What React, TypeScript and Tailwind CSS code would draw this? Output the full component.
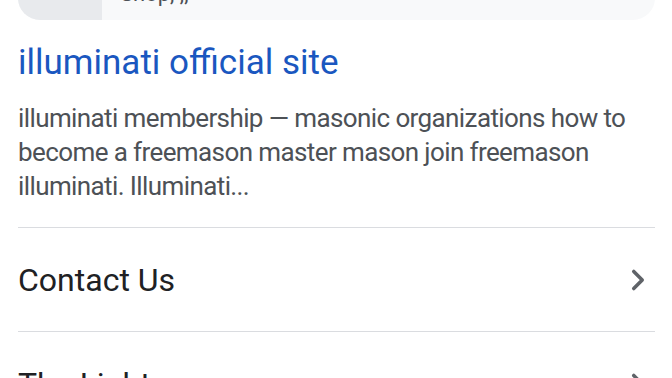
import { ChevronRight } from "lucide-react";

const links = ["Contact Us", "The Light"];

export default function App() {
  return (
    <div className="h-[378px] w-[672px] overflow-hidden bg-white px-[18px] pr-[17px] font-['Roboto',sans-serif]">
      {/* sitelink box, mostly scrolled off the top */}
      <div className="-mt-[40px] flex h-[60px] overflow-hidden rounded-[22px] bg-[#f8f9fa]">
        <div className="w-[84px] bg-[#e8eaed]" />
        <div className="flex items-end pb-[15px] pl-[18px] text-[22px] leading-none text-[#4d5156]">
          Shop, ,,
        </div>
      </div>

      <a href="#" className="mt-[23px] block text-[35px] leading-[40px] text-[#1a57c0]">
        illuminati official site
      </a>

      <p className="mt-[18px] text-[26px] leading-[34px] tracking-[-0.6px] text-[#4d5156]">
        illuminati membership — masonic organizations how to become a freemason master mason join freemason
        illuminati. Illuminati...
      </p>

      <div className="mt-[24px] border-t border-[#dadce0]">
        {links.map((label) => (
          <div
            key={label}
            className="flex h-[104px] items-center justify-between border-b border-[#dadce0] text-[32px] text-[#202124]"
          >
            <span>{label}</span>
            <ChevronRight className="h-[34px] w-[34px] text-[#5f6368]" strokeWidth={2.5} />
          </div>
        ))}
      </div>
    </div>
  );
}
